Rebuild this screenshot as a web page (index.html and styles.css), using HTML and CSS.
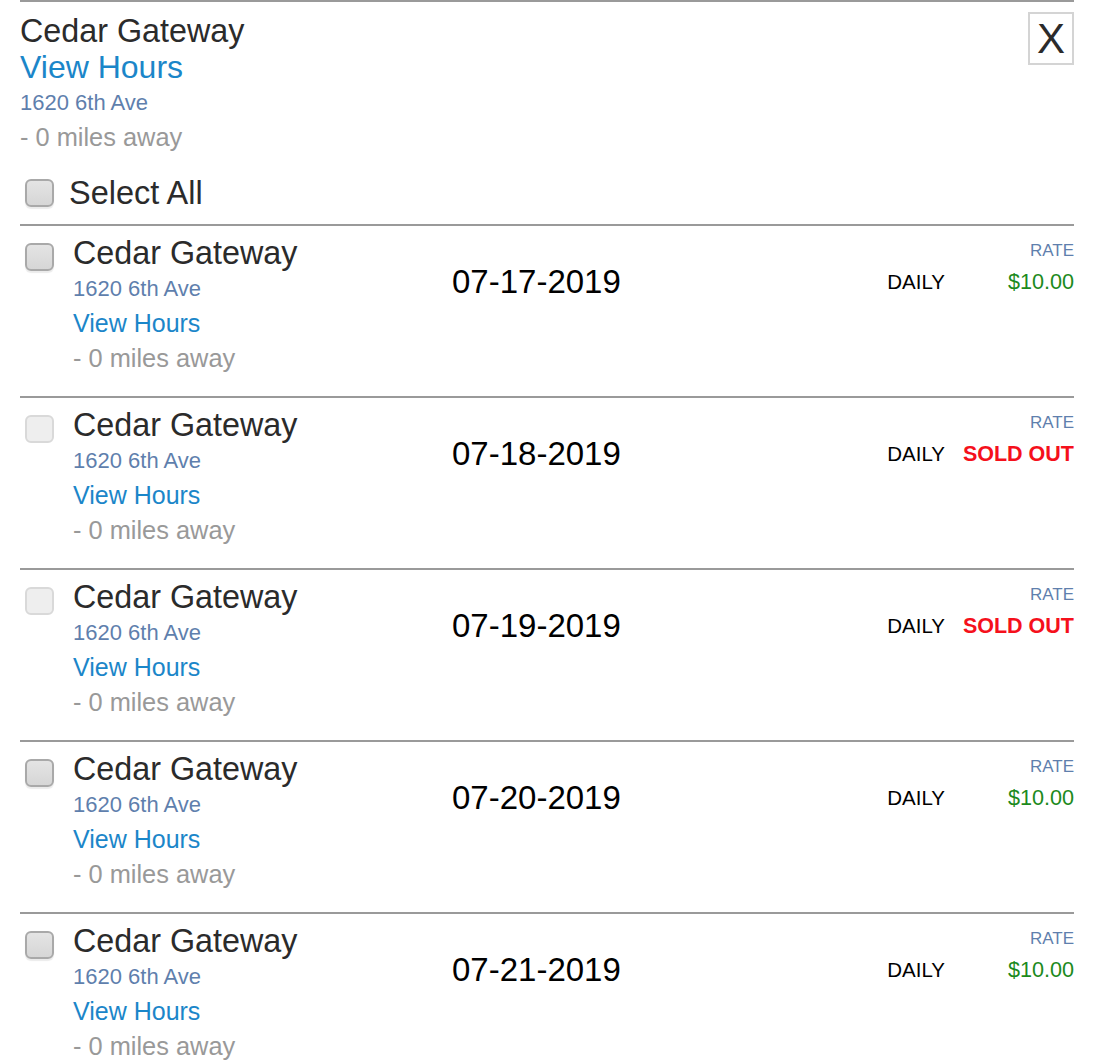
FILE: index.html
```html
<!DOCTYPE html>
<html lang="en">
<head>
    <meta charset="UTF-8">
    <meta name="viewport" content="width=device-width, initial-scale=1.0">
    <title>Cedar Gateway - Availability</title>
    <link rel="stylesheet" href="styles.css">
</head>
<body>
    <div class="panel">
        <div class="header">
            <div class="header-info">
                <div class="lot-name big">Cedar Gateway</div>
                <a class="hours big" href="#">View Hours</a>
                <div class="address">1620 6th Ave</div>
                <div class="distance">- 0 miles away</div>
                <label class="select-all">
                    <input type="checkbox" class="box"> Select All
                </label>
            </div>
            <button type="button" class="close">X</button>
        </div>

        <div class="row">
            <div class="check"><input type="checkbox" class="box"></div>
            <div class="info">
                <div class="lot-name">Cedar Gateway</div>
                <div class="address">1620 6th Ave</div>
                <a class="hours" href="#">View Hours</a>
                <div class="distance">- 0 miles away</div>
            </div>
            <div class="date">07-17-2019</div>
            <div class="rate">
                <div class="rate-label">RATE</div>
                <div class="rate-line">
                    <span class="period">DAILY</span>
                    <span class="price">$10.00</span>
                </div>
            </div>
        </div>

        <div class="row">
            <div class="check"><input type="checkbox" class="box" disabled></div>
            <div class="info">
                <div class="lot-name">Cedar Gateway</div>
                <div class="address">1620 6th Ave</div>
                <a class="hours" href="#">View Hours</a>
                <div class="distance">- 0 miles away</div>
            </div>
            <div class="date">07-18-2019</div>
            <div class="rate">
                <div class="rate-label">RATE</div>
                <div class="rate-line">
                    <span class="period">DAILY</span>
                    <span class="price sold-out">SOLD OUT</span>
                </div>
            </div>
        </div>

        <div class="row">
            <div class="check"><input type="checkbox" class="box" disabled></div>
            <div class="info">
                <div class="lot-name">Cedar Gateway</div>
                <div class="address">1620 6th Ave</div>
                <a class="hours" href="#">View Hours</a>
                <div class="distance">- 0 miles away</div>
            </div>
            <div class="date">07-19-2019</div>
            <div class="rate">
                <div class="rate-label">RATE</div>
                <div class="rate-line">
                    <span class="period">DAILY</span>
                    <span class="price sold-out">SOLD OUT</span>
                </div>
            </div>
        </div>

        <div class="row">
            <div class="check"><input type="checkbox" class="box"></div>
            <div class="info">
                <div class="lot-name">Cedar Gateway</div>
                <div class="address">1620 6th Ave</div>
                <a class="hours" href="#">View Hours</a>
                <div class="distance">- 0 miles away</div>
            </div>
            <div class="date">07-20-2019</div>
            <div class="rate">
                <div class="rate-label">RATE</div>
                <div class="rate-line">
                    <span class="period">DAILY</span>
                    <span class="price">$10.00</span>
                </div>
            </div>
        </div>

        <div class="row">
            <div class="check"><input type="checkbox" class="box"></div>
            <div class="info">
                <div class="lot-name">Cedar Gateway</div>
                <div class="address">1620 6th Ave</div>
                <a class="hours" href="#">View Hours</a>
                <div class="distance">- 0 miles away</div>
            </div>
            <div class="date">07-21-2019</div>
            <div class="rate">
                <div class="rate-label">RATE</div>
                <div class="rate-line">
                    <span class="period">DAILY</span>
                    <span class="price">$10.00</span>
                </div>
            </div>
        </div>
    </div>
</body>
</html>
```

FILE: styles.css
```css
body {
    margin: 0;
    font-family: "Liberation Sans", Arial, Helvetica, sans-serif;
    background: #fff;
    color: #2b2b2b;
}
.panel {
    margin: 0 36px 0 20px;
}
.header {
    display: flex;
    justify-content: space-between;
    align-items: flex-start;
    border-top: 2px solid #9a9a9a;
}
.header-info {
    padding-top: 11px;
}
.lot-name {
    font-size: 32.3px;
    line-height: 36px;
    color: #2b2b2b;
}
.hours {
    display: block;
    font-size: 25px;
    line-height: 35px;
    color: #1b86c9;
    text-decoration: none;
}
.hours.big {
    font-size: 32px;
    line-height: 36px;
}
.address {
    font-size: 22px;
    line-height: 35px;
    color: #5f7fad;
}
.distance {
    font-size: 25.4px;
    line-height: 35px;
    color: #999;
}
.select-all {
    display: flex;
    align-items: center;
    gap: 15px;
    margin-top: 18px;
    margin-bottom: 11px;
    height: 40px;
    font-size: 32.5px;
    color: #2b2b2b;
}
.box {
    appearance: none;
    -webkit-appearance: none;
    width: 29px;
    height: 28px;
    margin: 0 0 0 5px;
    border: 2px solid #a9a9a9;
    border-radius: 6px;
    background: linear-gradient(#e4e4e4, #d6d6d6);
    box-shadow: 0 2px 1px rgba(0, 0, 0, 0.08);
    box-sizing: border-box;
    flex-shrink: 0;
}
.box:disabled {
    border-color: #d9d9d9;
    background: #eeeeee;
    box-shadow: none;
}
.close {
    margin-top: 10px;
    width: 46px;
    height: 53px;
    padding: 0;
    border: 2px solid #d4d4d4;
    background: #fff;
    font-family: "Liberation Sans", Arial, sans-serif;
    font-size: 42px;
    line-height: 49px;
    color: #2b2b2b;
    cursor: pointer;
}
.row {
    display: grid;
    grid-template-columns: 53px 379px 1fr auto;
    border-top: 2px solid #9a9a9a;
    padding: 9px 0 20px;
}
.check {
    padding-top: 8px;
}
.date {
    margin-top: 29px;
    font-size: 33px;
    line-height: 36px;
    color: #000;
}
.rate {
    padding-top: 6px;
    text-align: right;
}
.rate-label {
    font-size: 17px;
    line-height: 20px;
    color: #5f7fad;
}
.rate-line {
    display: flex;
    justify-content: flex-end;
    margin-top: 3px;
    line-height: 36px;
}
.period {
    font-size: 20.5px;
    color: #000;
    margin-right: 17px;
}
.price {
    width: 112px;
    text-align: right;
    font-size: 21.6px;
    color: #1c8a1c;
}
.price.sold-out {
    font-weight: bold;
    font-size: 21.5px;
    color: #f5101c;
}
```
